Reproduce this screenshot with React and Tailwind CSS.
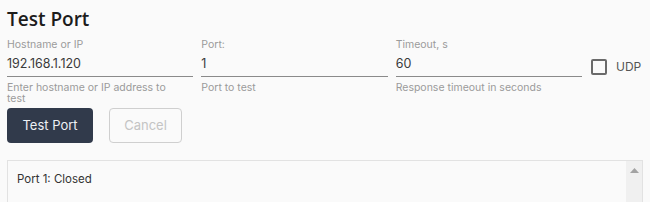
export default function App() {
    const fields = [
        { label: 'Hostname or IP', value: '192.168.1.120', help: 'Enter hostname or IP address to test' },
        { label: 'Port:', value: '1', help: 'Port to test' },
        { label: 'Timeout, s', value: '60', help: 'Response timeout in seconds' },
    ];

    return (
        <div className="h-[202px] overflow-hidden bg-[#fafafa] px-[7px] pt-[6px] text-[#222]" style={{ fontFamily: '"Inter", "Open Sans", sans-serif' }}>
            <h1 className="text-[19px] leading-[26px] font-semibold text-[#1c1c1c]" style={{ fontFamily: '"Open Sans", sans-serif' }}>Test Port</h1>

            <div className="mt-[6px] flex items-start">
                <div className="grid grid-cols-3 gap-x-[8px] w-[575px]">
                    {fields.map((f) => (
                        <div key={f.label}>
                            <div className="text-[10.5px] leading-[14px] text-[#9a9a9a]">{f.label}</div>
                            <div className="mt-[3px] border-b border-[#8a8a8a] pb-[3px] text-[12.5px] leading-[18px] text-[#3a3a3a]">{f.value}</div>
                            <div className="mt-[5px] max-w-[168px] text-[10.5px] leading-[11px] text-[#9a9a9a]">{f.help}</div>
                        </div>
                    ))}
                </div>
                <div className="ml-[9px] mt-[20px] flex items-center">
                    <div className="w-[16px] h-[16px] rounded-[2px] border-2 border-[#6a6a6a]"></div>
                    <span className="ml-[9px] text-[12px] text-[#555]">UDP</span>
                </div>
            </div>

            <div className="mt-[4px] flex gap-[16px]">
                <button className="w-[86px] h-[35px] rounded-[4px] bg-[#313a4b] text-[13px] text-[#eef0f4]">Test Port</button>
                <button className="w-[73px] h-[35px] rounded-[4px] border border-[#cfcfcf] bg-transparent text-[13px] text-[#c4c4c4]">Cancel</button>
            </div>

            <div className="mt-[17px] flex h-[60px] border border-[#e2e2e2] bg-[#fafafa]">
                <div className="flex-1 px-[9px] pt-[10px] text-[11.5px] text-[#333]">Port 1: Closed</div>
                <div className="w-[16px] bg-[#f0f0f0] flex justify-center pt-[7px]">
                    <svg width="9" height="5" viewBox="0 0 9 5"><path d="M0 5 L4.5 0 L9 5 Z" fill="#a3a3a3" /></svg>
                </div>
            </div>
        </div>
    );
}
